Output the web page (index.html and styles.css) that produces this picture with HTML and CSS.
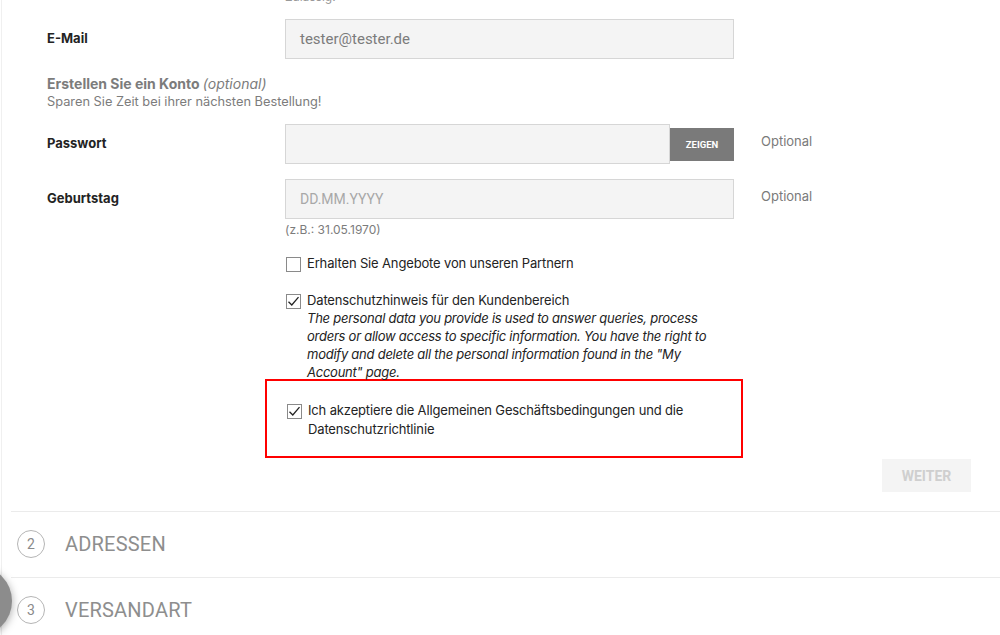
FILE: index.html
```html
<!DOCTYPE html>
<html lang="de">
<head>
<meta charset="utf-8">
<title>Checkout</title>
<link rel="stylesheet" href="styles.css">
</head>
<body>
<div class="page">
  <div class="form">
    <div class="cut"><span class="cut-text">Zulässig.</span></div>

    <div class="row row-email">
      <label class="label">E-Mail</label>
      <div class="field"><div class="input">tester@tester.de</div></div>
      <div class="aside"></div>
    </div>

    <div class="account">
      <div class="account-title">Erstellen Sie ein Konto <em>(optional)</em></div>
      <div class="account-sub">Sparen Sie Zeit bei ihrer nächsten Bestellung!</div>
    </div>

    <div class="row row-pass">
      <label class="label">Passwort</label>
      <div class="field pass">
        <div class="input input-pass"></div>
        <button class="show-btn">ZEIGEN</button>
      </div>
      <div class="aside">Optional</div>
    </div>

    <div class="row row-birth">
      <label class="label">Geburtstag</label>
      <div class="field">
        <div class="input placeholder">DD.MM.YYYY</div>
        <div class="hint">(z.B.: 31.05.1970)</div>
      </div>
      <div class="aside">Optional</div>
    </div>

    <div class="checks">
      <div class="check check-1">
        <span class="box"></span>
        <div class="check-text">Erhalten Sie Angebote von unseren Partnern</div>
      </div>
      <div class="check check-2">
        <span class="box checked"><svg viewBox="0 0 15 15" width="15" height="15"><path d="M2.5 7.8 L5.8 11 L12.5 3.2" fill="none" stroke="#222" stroke-width="1.3"/></svg></span>
        <div class="check-text">Datenschutzhinweis für den Kundenbereich<br><em class="note">The personal data you provide is used to answer queries, process orders or allow access to specific information. You have the right to modify and delete all the personal information found in the "My Account" page.</em></div>
      </div>
      <div class="highlight">
        <div class="check check-3">
          <span class="box checked"><svg viewBox="0 0 15 15" width="15" height="15"><path d="M2.5 7.8 L5.8 11 L12.5 3.2" fill="none" stroke="#222" stroke-width="1.3"/></svg></span>
          <div class="check-text">Ich akzeptiere die Allgemeinen Geschäftsbedingungen und die Datenschutzrichtlinie</div>
        </div>
      </div>
    </div>

    <div class="actions"><button class="next-btn">WEITER</button></div>
  </div>

  <div class="steps">
    <div class="step"><span class="num">2</span><span class="step-title">ADRESSEN</span></div>
    <div class="step"><span class="num">3</span><span class="step-title">VERSANDART</span></div>
  </div>

  <div class="fab"></div>
</div>
</body>
</html>
```

FILE: styles.css
```css
* { box-sizing: border-box; }
html, body { margin: 0; padding: 0; background: #fff; }
body {
  font-family: Inter, "Noto Sans", sans-serif;
  color: #232323;
  width: 1000px;
  height: 635px;
  overflow: hidden;
}
.page {
  position: relative;
  height: 635px;
  border-left: 1px solid #f0f0f0;
  margin-left: 1px;
}
.form { padding-left: 45px; }

.cut { height: 6px; overflow: hidden; padding-left: 238px; }
.cut-text { display: block; margin-top: -10px; font-size: 12px; line-height: 14px; color: #999; }

.row {
  display: grid;
  grid-template-columns: 238px 449px auto;
  align-items: start;
}
.label {
  font-size: 13px;
  font-weight: 700;
  line-height: 16px;
  color: #232323;
  padding-top: 11px;
}
.aside {
  padding-left: 27px;
  padding-top: 9px;
  font-size: 13px;
  line-height: 16px;
  color: #7a7a7a;
}
.input {
  height: 40px;
  background: #f4f4f4;
  border: 1px solid #d6d6d6;
  font-family: Roboto, "Liberation Sans", sans-serif;
  font-size: 15px;
  color: #7c7c7c;
  padding: 0 14px;
  display: flex;
  align-items: center;
}
.placeholder { color: #a8a8a8; font-size: 14px; }
.row-email { margin-top: 13px; }

.account { margin-top: 16px; }
.account-title { font-size: 14px; font-weight: 700; line-height: 18px; color: #7c7c7c; }
.account-title em { font-weight: 400; }
.account-sub { font-size: 12.8px; line-height: 18px; color: #7c7c7c; }

.row-pass { margin-top: 13px; }
.pass { display: flex; align-items: center; }
.input-pass { flex: 1; }
.show-btn {
  width: 64px;
  height: 33px;
  background: #7a7a7a;
  border: 0;
  color: #fff;
  font-family: Roboto, "Liberation Sans", sans-serif;
  font-size: 9.5px;
  font-weight: 700;
  padding: 0;
}

.row-birth { margin-top: 15px; }
.hint {
  font-size: 12px;
  line-height: 16px;
  color: #7c7c7c;
  margin-top: 3px;
}

.checks { padding-left: 239px; }
.check { display: flex; align-items: flex-start; gap: 6px; }
.box {
  flex: none;
  width: 15px;
  height: 15px;
  border: 1px solid #8a8a8a;
  background: #fff;
  display: flex;
  align-items: center;
  justify-content: center;
  overflow: visible;
}
.box svg { display: block; flex: none; }
.check-text {
  font-size: 13px;
  line-height: 18px;
  letter-spacing: -0.15px;
  color: #232323;
  margin-top: -3px;
  width: 427px;
}
.note { letter-spacing: -0.25px; }
.check-1 { margin-top: 19px; }
.check-2 { margin-top: 22px; }

.highlight {
  margin-top: -2px;
  margin-left: -21px;
  width: 478px;
  height: 79px;
  border: 2px solid #ff0000;
  padding: 23px 0 0 20px;
}
.check-3 .check-text { line-height: 19px; width: 440px; }

.actions { display: flex; justify-content: flex-end; padding-right: 29px; margin-top: 1px; }
.next-btn {
  width: 89px;
  height: 33px;
  border: 0;
  background: #f4f4f4;
  color: #cfcfcf;
  font-family: Roboto, "Liberation Sans", sans-serif;
  font-size: 14px;
  font-weight: 700;
  padding: 0;
}

.steps { margin-left: 9px; margin-top: 19px; }
.step {
  height: 66px;
  border-top: 1px solid #ebebeb;
  display: flex;
  align-items: center;
  padding-left: 6px;
  padding-bottom: 2px;
  gap: 20px;
}
.num {
  width: 28px;
  height: 28px;
  border: 1px solid #b5b5b5;
  border-radius: 50%;
  display: flex;
  align-items: center;
  justify-content: center;
  font-family: Roboto, "Liberation Sans", sans-serif;
  font-size: 14px;
  color: #8a8a8a;
}
.step-title {
  font-family: Roboto, "Liberation Sans", sans-serif;
  font-size: 20px;
  color: #8e8e8e;
  letter-spacing: 0.2px;
}

.fab {
  position: absolute;
  left: -60px;
  top: 566px;
  width: 70px;
  height: 70px;
  border-radius: 50%;
  background: #8c8c8c;
  box-shadow: 0 2px 8px rgba(0,0,0,0.35);
}
```
